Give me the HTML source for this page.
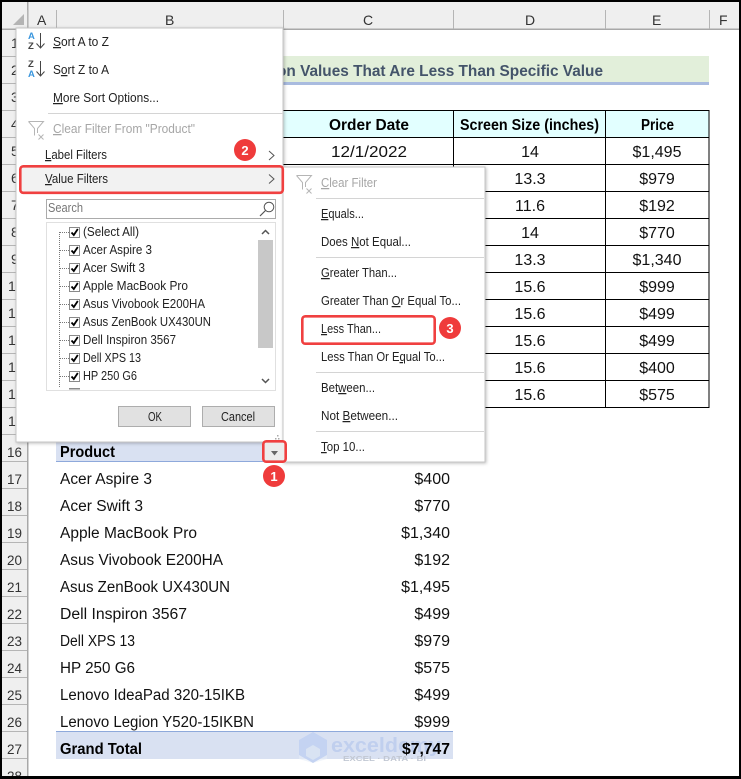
<!DOCTYPE html>
<html><head><meta charset="utf-8"><title>Value Filters</title>
<style>
html,body{margin:0;padding:0;background:#fff;width:741px;height:779px;overflow:hidden}
svg{display:block;font-family:"Liberation Sans",sans-serif}
.c{font-size:15.5px;fill:#111}
.d{font-size:16px;fill:#111}
.b{font-size:15.5px;fill:#000;font-weight:bold}
.h{font-size:14px;fill:#333}
.m{font-size:12.5px;fill:#222}
.g{font-size:12.5px;fill:#a6a6a6}
.u{text-decoration:underline}
.n{font-size:13px;fill:#fff;font-weight:bold}
</style></head><body>
<svg width="741" height="779" viewBox="0 0 741 779" xmlns="http://www.w3.org/2000/svg">
<defs>
<filter id="s" x="-5%" y="-5%" width="110%" height="110%"><feDropShadow dx="1" dy="1" stdDeviation="1.5" flood-color="#000" flood-opacity=".25"/></filter>
</defs>
<rect width="741" height="779" fill="#fff"/>
<!-- headers -->
<rect x="2" y="2" width="737" height="27" fill="#efefef"/>
<rect x="2" y="2" width="26" height="774" fill="#efefef"/>
<rect x="2" y="28.5" width="737" height="1.5" fill="#a8a8a8"/>
<rect x="27" y="2" width="1.5" height="774" fill="#a8a8a8"/>
<g fill="#b5b5b5">
<rect x="2" y="56" width="25" height="1"/><rect x="2" y="83" width="25" height="1"/><rect x="2" y="110" width="25" height="1"/><rect x="2" y="137" width="25" height="1"/><rect x="2" y="164" width="25" height="1"/><rect x="2" y="191" width="25" height="1"/><rect x="2" y="218" width="25" height="1"/><rect x="2" y="245" width="25" height="1"/><rect x="2" y="272" width="25" height="1"/><rect x="2" y="299" width="25" height="1"/><rect x="2" y="326" width="25" height="1"/><rect x="2" y="353" width="25" height="1"/><rect x="2" y="380" width="25" height="1"/><rect x="2" y="407" width="25" height="1"/><rect x="2" y="434" width="25" height="1"/><rect x="2" y="461" width="25" height="1"/><rect x="2" y="488" width="25" height="1"/><rect x="2" y="515" width="25" height="1"/><rect x="2" y="542" width="25" height="1"/><rect x="2" y="569" width="25" height="1"/><rect x="2" y="596" width="25" height="1"/><rect x="2" y="623" width="25" height="1"/><rect x="2" y="650" width="25" height="1"/><rect x="2" y="677" width="25" height="1"/><rect x="2" y="704" width="25" height="1"/><rect x="2" y="731" width="25" height="1"/><rect x="2" y="758" width="25" height="1"/>
<rect x="27" y="10" width="1" height="19"/><rect x="56" y="10" width="1" height="19"/><rect x="283" y="10" width="1" height="19"/><rect x="453" y="10" width="1" height="19"/><rect x="605" y="10" width="1" height="19"/><rect x="709" y="10" width="1" height="19"/>
</g>
<polygon points="24,14 24,25 13,25" fill="#b4b4b4"/>
<text class="h" x="37" y="25">A</text><text class="h" x="165" y="25">B</text><text class="h" x="363" y="25">C</text><text class="h" x="525" y="25">D</text><text class="h" x="652" y="25">E</text><text class="h" x="719" y="25">F</text>
<g class="h">
<text x="11" y="48">1</text><text x="11" y="75">2</text><text x="11" y="102">3</text><text x="11" y="129">4</text><text x="11" y="156">5</text><text x="11" y="183">6</text><text x="11" y="210">7</text><text x="11" y="237">8</text><text x="11" y="264">9</text>
<text x="8" y="291">10</text><text x="8" y="318">11</text><text x="8" y="345">12</text><text x="8" y="372">13</text><text x="8" y="399">14</text><text x="8" y="426">15</text>
<text x="7" y="457" textLength="15" lengthAdjust="spacingAndGlyphs">16</text><text x="7" y="484" textLength="15" lengthAdjust="spacingAndGlyphs">17</text><text x="7" y="511" textLength="15" lengthAdjust="spacingAndGlyphs">18</text><text x="7" y="538" textLength="15" lengthAdjust="spacingAndGlyphs">19</text><text x="7" y="565" textLength="15" lengthAdjust="spacingAndGlyphs">20</text><text x="7" y="592" textLength="15" lengthAdjust="spacingAndGlyphs">21</text><text x="7" y="619" textLength="15" lengthAdjust="spacingAndGlyphs">22</text><text x="7" y="646" textLength="15" lengthAdjust="spacingAndGlyphs">23</text><text x="7" y="673" textLength="15" lengthAdjust="spacingAndGlyphs">24</text><text x="7" y="700" textLength="15" lengthAdjust="spacingAndGlyphs">25</text><text x="7" y="727" textLength="15" lengthAdjust="spacingAndGlyphs">26</text><text x="7" y="754" textLength="15" lengthAdjust="spacingAndGlyphs">27</text><text x="7" y="781" textLength="15" lengthAdjust="spacingAndGlyphs">28</text>
</g>
<!-- title -->
<rect x="200" y="56" width="509" height="26" fill="#e2efda"/>
<rect x="200" y="82" width="509" height="3" fill="#a9bbdf"/>
<text x="277" y="76" font-size="16" font-weight="bold" fill="#44546a" textLength="326" lengthAdjust="spacingAndGlyphs">on Values That Are Less Than Specific Value</text>
<!-- table -->
<rect x="283" y="110" width="426" height="27" fill="#e2ffff"/>
<g fill="#000">
<rect x="200" y="110" width="509" height="1"/><rect x="200" y="137" width="509" height="1"/><rect x="200" y="164" width="509" height="1"/><rect x="200" y="191" width="509" height="1"/><rect x="200" y="218" width="509" height="1"/><rect x="200" y="245" width="509" height="1"/><rect x="200" y="272" width="509" height="1"/><rect x="200" y="299" width="509" height="1"/><rect x="200" y="326" width="509" height="1"/><rect x="200" y="353" width="509" height="1"/><rect x="200" y="380" width="509" height="1"/><rect x="200" y="407" width="509" height="1"/>
<rect x="453" y="110" width="1" height="297"/><rect x="605" y="110" width="1" height="297"/><rect x="708.500" y="110" width="1" height="298"/>
</g>
<text class="b" x="329" y="130" textLength="80" lengthAdjust="spacingAndGlyphs">Order Date</text>
<text class="b" x="460" y="130" textLength="139" lengthAdjust="spacingAndGlyphs">Screen Size (inches)</text>
<text class="b" x="641" y="130" textLength="33" lengthAdjust="spacingAndGlyphs">Price</text>
<text class="c" x="331" y="157" textLength="76" lengthAdjust="spacingAndGlyphs">12/1/2022</text>
<g class="d" text-anchor="middle">
<text x="530" y="157">14</text><text x="530" y="184">13.3</text><text x="530" y="211">11.6</text><text x="530" y="238">14</text><text x="530" y="265">13.3</text><text x="530" y="292">15.6</text><text x="530" y="319">15.6</text><text x="530" y="346">15.6</text><text x="530" y="373">15.6</text><text x="530" y="400">15.6</text>
<text x="657" y="157">$1,495</text><text x="657" y="184">$979</text><text x="657" y="211">$192</text><text x="657" y="238">$770</text><text x="657" y="265">$1,340</text><text x="657" y="292">$999</text><text x="657" y="319">$499</text><text x="657" y="346">$499</text><text x="657" y="373">$400</text><text x="657" y="400">$575</text>
</g>
<!-- pivot -->
<rect x="56" y="434" width="397" height="27" fill="#d9e1f2"/>
<rect x="56" y="461" width="397" height="1" fill="#8ea9db"/>
<text class="b" x="60" y="457" textLength="55" lengthAdjust="spacingAndGlyphs">Product</text>
<g class="c">
<text x="60" y="484" textLength="92" lengthAdjust="spacingAndGlyphs">Acer Aspire 3</text>
<text x="60" y="511" textLength="83" lengthAdjust="spacingAndGlyphs">Acer Swift 3</text>
<text x="60" y="538" textLength="137" lengthAdjust="spacingAndGlyphs">Apple MacBook Pro</text>
<text x="60" y="565" textLength="163" lengthAdjust="spacingAndGlyphs">Asus Vivobook E200HA</text>
<text x="60" y="592" textLength="170" lengthAdjust="spacingAndGlyphs">Asus ZenBook UX430UN</text>
<text x="60" y="619" textLength="127" lengthAdjust="spacingAndGlyphs">Dell Inspiron 3567</text>
<text x="60" y="646" textLength="75" lengthAdjust="spacingAndGlyphs">Dell XPS 13</text>
<text x="60" y="673" textLength="75" lengthAdjust="spacingAndGlyphs">HP 250 G6</text>
<text x="60" y="700" textLength="185" lengthAdjust="spacingAndGlyphs">Lenovo IdeaPad 320-15IKB</text>
<text x="60" y="727" textLength="194" lengthAdjust="spacingAndGlyphs">Lenovo Legion Y520-15IKBN</text>
</g>
<g class="d" text-anchor="end">
<text x="450" y="484">$400</text><text x="450" y="511">$770</text><text x="450" y="538">$1,340</text><text x="450" y="565">$192</text><text x="450" y="592">$1,495</text><text x="450" y="619">$499</text><text x="450" y="646">$979</text><text x="450" y="673">$575</text><text x="450" y="700">$499</text><text x="450" y="727">$999</text>
</g>
<rect x="56" y="732" width="397" height="27" fill="#d9e1f2"/>
<rect x="56" y="731" width="397" height="1" fill="#8ea9db"/>
<text class="b" x="60" y="754" textLength="82" lengthAdjust="spacingAndGlyphs">Grand Total</text>
<!-- watermark -->
<polygon points="313,732 327,740 327,755 313,763 299,755 299,740" fill="#c4d3f2"/>
<polygon points="313,745 320,749 320,756 313,760 306,756 306,749" fill="#d9e3f3"/>
<polygon points="299,755 313,763 327,755 327,759 313,763 299,759" fill="#e6ecf6" opacity=".6"/>
<text x="331" y="752" font-size="20" font-weight="bold" fill="#c0cfee" textLength="110" lengthAdjust="spacingAndGlyphs">exceldemy</text>
<text x="343" y="761" font-size="7" font-weight="bold" fill="#c2c8d3" textLength="83" lengthAdjust="spacingAndGlyphs">EXCEL · DATA · BI</text>
<text class="b" x="402" y="754" textLength="48" lengthAdjust="spacingAndGlyphs">$7,747</text>
<!-- main menu -->
<rect x="16" y="28" width="267" height="414" fill="#fff" stroke="#c6c6c6" stroke-width="1" filter="url(#s)"/>
<!-- sort icons -->
<text x="28" y="39" font-size="9.500" font-weight="bold" fill="#3a96dd">A</text>
<text x="28" y="49" font-size="9.500" font-weight="bold" fill="#444">Z</text>
<path d="M40.500 33V48M36.500 43.500l4 4.500 4-4.500" fill="none" stroke="#444" stroke-width="1"/>
<text x="28" y="67" font-size="9.500" font-weight="bold" fill="#444">Z</text>
<text x="28" y="77" font-size="9.500" font-weight="bold" fill="#3a96dd">A</text>
<path d="M40.500 61V76M36.500 71.500l4 4.500 4-4.500" fill="none" stroke="#444" stroke-width="1"/>
<g class="m">
<text x="53" y="46" textLength="56" lengthAdjust="spacingAndGlyphs"><tspan class="u">S</tspan>ort A to Z</text>
<text x="53" y="74" textLength="56" lengthAdjust="spacingAndGlyphs">S<tspan class="u">o</tspan>rt Z to A</text>
<text x="53" y="102" textLength="106" lengthAdjust="spacingAndGlyphs"><tspan class="u">M</tspan>ore Sort Options...</text>
</g>
<rect x="48" y="113" width="235" height="1" fill="#d4d4d4"/>
<path d="M28.500 121.500H43.500L37.500 128.500V133M28.500 121.500L34.500 128.500V135.500" fill="none" stroke="#b5b5b5" stroke-width="1"/>
<path d="M38.500 134.500l5 5M43.500 134.500l-5 5" stroke="#b5b5b5" stroke-width="1"/>
<text class="g" x="53" y="133" textLength="142" lengthAdjust="spacingAndGlyphs"><tspan class="u">C</tspan>lear Filter From "Product"</text>
<text class="m" x="45" y="159" textLength="62" lengthAdjust="spacingAndGlyphs"><tspan class="u">L</tspan>abel Filters</text>
<path d="M269 151l5 4.500-5 4.500" fill="none" stroke="#555" stroke-width="1"/>
<rect x="20" y="167" width="263" height="25" fill="#f2f2f2"/>
<text class="m" x="45" y="183" textLength="63" lengthAdjust="spacingAndGlyphs"><tspan class="u">V</tspan>alue Filters</text>
<path d="M269 174.500l5 4.500-5 4.500" fill="none" stroke="#555" stroke-width="1"/>
<rect x="46.500" y="199.500" width="229" height="19" fill="#fff" stroke="#ababab"/>
<text x="48" y="212" font-size="12.500" fill="#777" textLength="35" lengthAdjust="spacingAndGlyphs">Search</text>
<circle cx="269" cy="207" r="4.800" fill="none" stroke="#555"/>
<path d="M265.500 210.500L260 216" stroke="#555" stroke-width="1.200"/>
<!-- list -->
<rect x="46.500" y="222.500" width="229" height="168" fill="#fff" stroke="#e0e0e0"/>
<rect x="258" y="240" width="15" height="108" fill="#c8c8c8"/>
<path d="M262 234l3.500-3.500 3.500 3.500" fill="none" stroke="#555" stroke-width="1.500"/>
<path d="M262 379l3.500 3.500 3.500-3.500" fill="none" stroke="#555" stroke-width="1.500"/>
<path d="M59.500 232V388M60 232.500H69M60 250.500H69M60 268.500H69M60 286.500H69M60 304.500H69M60 322.500H69M60 340.500H69M60 358.500H69M60 376.500H69" fill="none" stroke="#777" stroke-width="1" stroke-dasharray="1 1"/>
<g fill="#fff" stroke="#8a8a8a">
<rect x="69.500" y="227.500" width="10" height="10"/><rect x="69.500" y="245.500" width="10" height="10"/><rect x="69.500" y="263.500" width="10" height="10"/><rect x="69.500" y="281.500" width="10" height="10"/><rect x="69.500" y="299.500" width="10" height="10"/><rect x="69.500" y="317.500" width="10" height="10"/><rect x="69.500" y="335.500" width="10" height="10"/><rect x="69.500" y="353.500" width="10" height="10"/><rect x="69.500" y="371.500" width="10" height="10"/>
</g>
<rect x="69" y="388" width="11" height="1.500" fill="#8a8a8a"/>
<path d="M71.500 232.500l2.300 2.500 4-6M71.500 250.500l2.300 2.500 4-6M71.500 268.500l2.300 2.500 4-6M71.500 286.500l2.300 2.500 4-6M71.500 304.500l2.300 2.500 4-6M71.500 322.500l2.300 2.500 4-6M71.500 340.500l2.300 2.500 4-6M71.500 358.500l2.300 2.500 4-6M71.500 376.500l2.300 2.500 4-6" fill="none" stroke="#000" stroke-width="1.800"/>
<g class="m">
<text x="83" y="236" textLength="56" lengthAdjust="spacingAndGlyphs">(Select All)</text>
<text x="83" y="254" textLength="69" lengthAdjust="spacingAndGlyphs">Acer Aspire 3</text>
<text x="83" y="272" textLength="62" lengthAdjust="spacingAndGlyphs">Acer Swift 3</text>
<text x="83" y="290" textLength="105" lengthAdjust="spacingAndGlyphs">Apple MacBook Pro</text>
<text x="83" y="308" textLength="122" lengthAdjust="spacingAndGlyphs">Asus Vivobook E200HA</text>
<text x="83" y="326" textLength="128" lengthAdjust="spacingAndGlyphs">Asus ZenBook UX430UN</text>
<text x="83" y="344" textLength="93" lengthAdjust="spacingAndGlyphs">Dell Inspiron 3567</text>
<text x="83" y="362" textLength="58" lengthAdjust="spacingAndGlyphs">Dell XPS 13</text>
<text x="83" y="380" textLength="54" lengthAdjust="spacingAndGlyphs">HP 250 G6</text>
</g>
<rect x="118.500" y="406.500" width="72" height="20" fill="#e1e1e1" stroke="#adadad"/>
<rect x="202.500" y="406.500" width="72" height="20" fill="#e1e1e1" stroke="#adadad"/>
<text class="m" x="148" y="421" textLength="14" lengthAdjust="spacingAndGlyphs">OK</text>
<text class="m" x="221" y="421" textLength="34" lengthAdjust="spacingAndGlyphs">Cancel</text>
<g fill="#a8a8a8"><rect x="277" y="435" width="1.500" height="1.500"/><rect x="275" y="438" width="1.500" height="1.500"/><rect x="278" y="438" width="1.500" height="1.500"/></g>
<!-- submenu -->
<rect x="283" y="167" width="202" height="295" fill="#fff" stroke="#c6c6c6" stroke-width="1" filter="url(#s)"/>
<path d="M296.500 175.500H311.500L305.500 182.500V187M296.500 175.500L302.500 182.500V189.500" fill="none" stroke="#b5b5b5"/>
<path d="M306.500 188.500l5 5M311.500 188.500l-5 5" stroke="#b5b5b5"/>
<text class="g" x="321" y="187" textLength="56" lengthAdjust="spacingAndGlyphs"><tspan class="u">C</tspan>lear Filter</text>
<g fill="#d4d4d4"><rect x="316" y="198" width="168" height="1"/><rect x="316" y="257" width="168" height="1"/><rect x="316" y="372" width="168" height="1"/><rect x="316" y="431" width="168" height="1"/></g>
<g class="m">
<text x="321" y="218" textLength="43" lengthAdjust="spacingAndGlyphs"><tspan class="u">E</tspan>quals...</text>
<text x="321" y="246" textLength="90" lengthAdjust="spacingAndGlyphs">Does <tspan class="u">N</tspan>ot Equal...</text>
<text x="321" y="277" textLength="76" lengthAdjust="spacingAndGlyphs"><tspan class="u">G</tspan>reater Than...</text>
<text x="321" y="305" textLength="140" lengthAdjust="spacingAndGlyphs">Greater Than <tspan class="u">O</tspan>r Equal To...</text>
<text x="321" y="333" textLength="60" lengthAdjust="spacingAndGlyphs"><tspan class="u">L</tspan>ess Than...</text>
<text x="321" y="361" textLength="124" lengthAdjust="spacingAndGlyphs">Less Than Or E<tspan class="u">q</tspan>ual To...</text>
<text x="321" y="392" textLength="54" lengthAdjust="spacingAndGlyphs">Bet<tspan class="u">w</tspan>een...</text>
<text x="321" y="420" textLength="77" lengthAdjust="spacingAndGlyphs">Not <tspan class="u">B</tspan>etween...</text>
<text x="321" y="451" textLength="44" lengthAdjust="spacingAndGlyphs"><tspan class="u">T</tspan>op 10...</text>
</g>
<!-- dropdown button -->
<rect x="264" y="442" width="21" height="19" fill="#ececec"/>
<polygon points="271,451 278,451 274.500,455.500" fill="#666"/>
<rect x="263.300" y="441.300" width="22.400" height="20.400" rx="3" fill="none" stroke="#f04040" stroke-width="2.600"/>
<!-- annotations -->
<rect x="20.300" y="166.300" width="262.500" height="26.500" rx="3" fill="none" stroke="#f04040" stroke-width="2.600"/>
<rect x="302.300" y="316.300" width="132.400" height="27.400" rx="3" fill="none" stroke="#f04040" stroke-width="2.600"/>
<circle cx="274" cy="476" r="11" fill="#ef3b3b"/><text class="n" x="274" y="481" text-anchor="middle">1</text>
<circle cx="245" cy="150" r="11" fill="#ef3b3b"/><text class="n" x="245" y="155" text-anchor="middle">2</text>
<circle cx="450" cy="328" r="11" fill="#ef3b3b"/><text class="n" x="450" y="333" text-anchor="middle">3</text>
<!-- black frame -->
<rect x="0" y="0" width="741" height="2" fill="#000"/>
<rect x="0" y="0" width="2" height="779" fill="#000"/>
<rect x="739" y="0" width="2" height="779" fill="#000"/>
<rect x="0" y="776" width="741" height="3" fill="#000"/>
</svg>
</body></html>
